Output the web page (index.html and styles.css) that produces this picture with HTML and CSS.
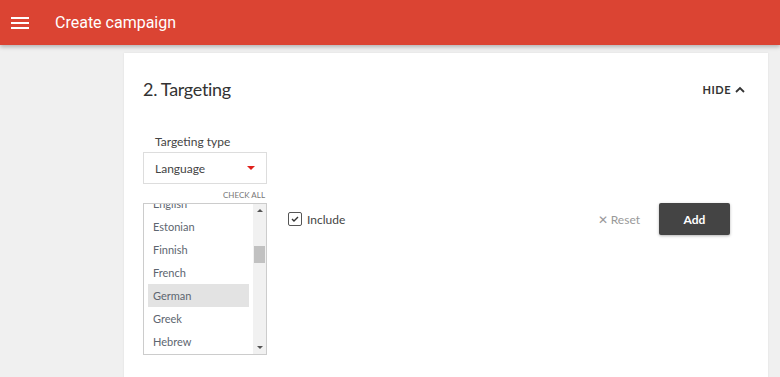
FILE: index.html
```html
<!doctype html>
<html lang="en">
<head>
    <meta charset="UTF-8">
    <meta name="viewport" content="width=device-width, initial-scale=1.0">
    <title>Create campaign</title>
    <link rel="stylesheet" href="styles.css">
</head>
<body>
    <div class="top-bar">
        <svg class="menu-icon" width="18" height="12" viewBox="0 0 18 12">
            <rect x="0" y="0" width="18" height="2" fill="#fff"/>
            <rect x="0" y="5" width="18" height="2" fill="#fff"/>
            <rect x="0" y="10" width="18" height="2" fill="#fff"/>
        </svg>
        <span class="page-title">Create campaign</span>
    </div>

    <div class="page">
        <div class="card">
            <div class="card-head">
                <h2>2. Targeting</h2>
                <a class="hide-link" href="#">HIDE
                    <svg width="10" height="7" viewBox="0 0 10 7">
                        <path d="M1 6 L5 2 L9 6" fill="none" stroke="#333" stroke-width="1.8"/>
                    </svg>
                </a>
            </div>

            <div class="targeting">
                <div class="picker">
                    <div class="field-label">Targeting type</div>
                    <div class="select">
                        <span>Language</span>
                        <span class="caret"></span>
                    </div>
                    <div class="check-all">CHECK ALL</div>
                    <div class="listbox">
                        <div class="options">
                            <div class="option">English</div>
                            <div class="option">Estonian</div>
                            <div class="option">Finnish</div>
                            <div class="option">French</div>
                            <div class="option selected">German</div>
                            <div class="option">Greek</div>
                            <div class="option">Hebrew</div>
                        </div>
                        <div class="scrollbar">
                            <span class="arrow up"></span>
                            <div class="track"><div class="thumb"></div></div>
                            <span class="arrow down"></span>
                        </div>
                    </div>
                </div>

                <div class="actions">
                    <label class="include">
                        <span class="checkbox">
                            <svg width="8" height="6" viewBox="0 0 8 6">
                                <path d="M1 3 L3 5 L7 1" fill="none" stroke="#333" stroke-width="1.4"/>
                            </svg>
                        </span>
                        Include
                    </label>
                    <div class="spacer"></div>
                    <a class="reset" href="#">&#x2715; Reset</a>
                    <button class="add-btn">Add</button>
                </div>
            </div>
        </div>
    </div>
</body>
</html>
```

FILE: styles.css
```css
body {
    margin: 0;
    background-color: #f0f0f0;
    font-family: Lato, "Open Sans", sans-serif;
    color: #333;
    height: 377px;
    overflow: hidden;
}

.top-bar {
    height: 45px;
    background-color: #db4433;
    display: flex;
    align-items: center;
    padding-left: 11px;
    box-shadow: 0 2px 4px rgba(0, 0, 0, 0.25);
    position: relative;
    z-index: 2;
}

.menu-icon {
    margin-right: 26px;
}

.page-title {
    color: #fff;
    font-family: Roboto, sans-serif;
    font-size: 16px;
}

.page {
    padding: 8px 12px 0 124px;
}

.card {
    background-color: #fff;
    height: 340px;
    padding: 0 22px 0 19px;
    box-shadow: 0 0 2px rgba(0, 0, 0, 0.08);
}

.card-head {
    display: flex;
    justify-content: space-between;
    align-items: center;
    padding-top: 25px;
}

.card-head h2 {
    margin: 0;
    font-size: 18px;
    font-weight: normal;
    color: #333;
    letter-spacing: -0.3px;
}

.hide-link {
    color: #333;
    text-decoration: none;
    font-size: 11px;
    font-weight: bold;
    letter-spacing: 0.5px;
    display: flex;
    align-items: center;
    gap: 4px;
    margin-right: 1px;
}

.targeting {
    display: flex;
    align-items: flex-start;
    margin-top: 34px;
}

.picker {
    width: 124px;
}

.field-label {
    font-size: 12px;
    color: #444;
    padding-left: 12px;
    margin-bottom: 3px;
}

.select {
    height: 30px;
    border: 1px solid #ddd;
    display: flex;
    align-items: center;
    justify-content: space-between;
    padding: 0 11px 0 11px;
    font-size: 12px;
    color: #444;
}

.caret {
    width: 0;
    height: 0;
    border-left: 4px solid transparent;
    border-right: 4px solid transparent;
    border-top: 4px solid #e0201b;
}

.check-all {
    text-align: right;
    font-size: 8px;
    color: #777;
    margin: 6px 2px 3px 0;
}

.listbox {
    height: 150px;
    border: 1px solid #ccc;
    display: flex;
    overflow: hidden;
}

.options {
    flex: 1;
    padding: 0 4px;
    margin-top: -12px;
}

.option {
    height: 23px;
    line-height: 23px;
    font-size: 11px;
    color: #5d6670;
    padding-left: 5px;
}

.option.selected {
    background-color: #e3e3e3;
}

.scrollbar {
    width: 13px;
    background-color: #f1f1f1;
    display: flex;
    flex-direction: column;
    align-items: center;
}

.arrow {
    width: 0;
    height: 0;
    border-left: 3px solid transparent;
    border-right: 3px solid transparent;
    margin: 5px 0;
}

.arrow.up {
    border-bottom: 3px solid #555;
}

.arrow.down {
    border-top: 3px solid #555;
}

.track {
    flex: 1;
    width: 100%;
    display: flex;
    justify-content: center;
}

.thumb {
    width: 11px;
    height: 17px;
    margin-top: 29px;
    background-color: #c1c1c1;
}

.actions {
    flex: 1;
    display: flex;
    align-items: center;
    height: 32px;
    margin-top: 69px;
    margin-left: 21px;
    margin-right: 16px;
}

.include {
    display: flex;
    align-items: center;
    gap: 5px;
    font-size: 12px;
    color: #444;
}

.checkbox {
    width: 12px;
    height: 12px;
    border: 1px solid #555;
    border-radius: 2px;
    display: flex;
    align-items: center;
    justify-content: center;
}

.spacer {
    flex: 1;
}

.reset {
    color: #999;
    text-decoration: none;
    font-size: 12px;
    margin-right: 19px;
}

.add-btn {
    width: 71px;
    height: 32px;
    border: none;
    border-radius: 2px;
    background-color: #444;
    color: #fff;
    font-family: Lato, sans-serif;
    font-size: 12px;
    font-weight: bold;
    box-shadow: 0 1px 3px rgba(0, 0, 0, 0.3);
}
```
